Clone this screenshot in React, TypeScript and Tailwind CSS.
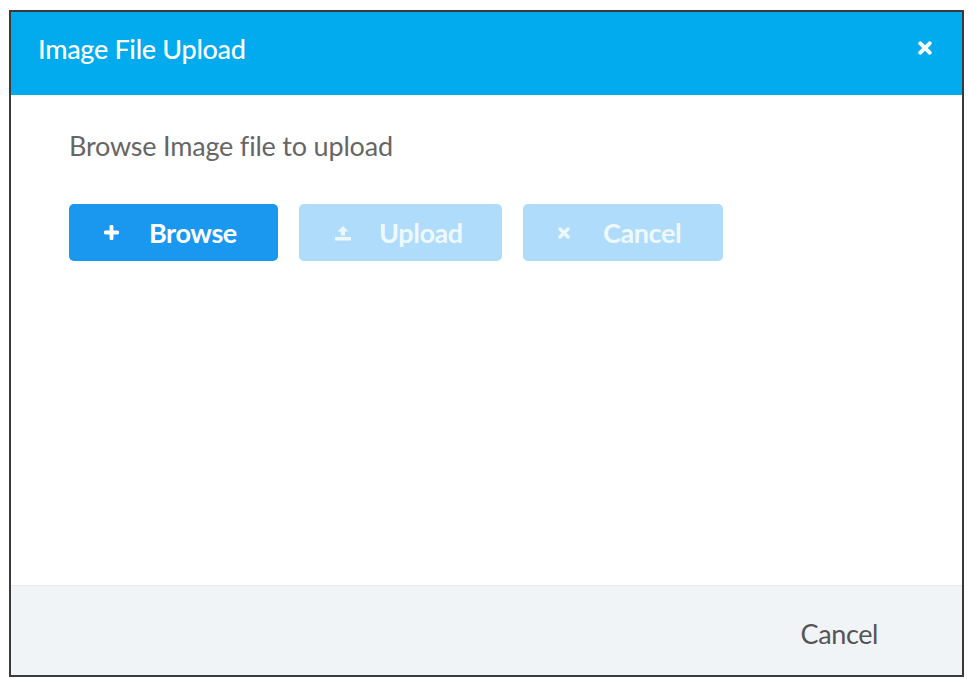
import React from "react";

const PlusIcon = () => (
  <svg width="15" height="15" viewBox="0 0 14 14" fill="none">
    <path d="M7 1.5v11M1.5 7h11" stroke="currentColor" strokeWidth="3.6" strokeLinecap="round" />
  </svg>
);

const UploadIcon = () => (
  <svg width="18" height="16" viewBox="0 0 18 16" fill="currentColor">
    <path d="M9 1l5.5 5.5H11v4H7v-4H3.5z" />
    <rect x="1" y="12" width="16" height="3.5" rx="0.6" />
  </svg>
);

const XIcon = ({ size = 12 }: { size?: number }) => (
  <svg width={size} height={size} viewBox="0 0 12 12" fill="none">
    <path d="M2 2l8 8M10 2l-8 8" stroke="currentColor" strokeWidth="3.4" strokeLinecap="round" />
  </svg>
);

interface BtnProps {
  icon: React.ReactNode;
  label: string;
  disabled?: boolean;
  className?: string;
}

const ActionButton: React.FC<BtnProps> = ({ icon, label, disabled, className = "" }) => (
  <button
    disabled={disabled}
    className={`flex items-center h-[57px] rounded-[5px] pl-[35px] font-bold text-[27px] leading-[32px] ${
      disabled ? "bg-[#aedcfa] text-[#eef8ff]" : "bg-[#1a97ef] text-white"
    } ${className}`}
  >
    <span className="w-[45px] flex items-center">{icon}</span>
    <span className="tracking-[-0.4px]">{label}</span>
  </button>
);

export default function App() {
  return (
    <div className="min-h-screen bg-white pt-[10px] pl-[9px] font-['Lato','Liberation_Sans',sans-serif]">
      <div className="w-[955px] h-[667px] border-2 border-[#3a3a3a] flex flex-col">
        {/* Title bar */}
        <div className="h-[83px] bg-[#02abee] flex items-center justify-between pl-[27px] pr-[30px]">
          <h1 className="text-white text-[27px] leading-[32px] font-medium tracking-[-0.3px] pb-[10px]">Image File Upload</h1>
          <span className="text-white pb-[12px]">
            <XIcon size={14} />
          </span>
        </div>

        {/* Body */}
        <div className="flex-1 bg-white px-[58px] pt-[35px]">
          <p className="text-[#666] text-[27px] leading-[32px] tracking-[-0.2px]">Browse Image file to upload</p>
          <div className="flex gap-[21px] mt-[42px]">
            <ActionButton icon={<PlusIcon />} label="Browse" className="w-[209px]" />
            <ActionButton icon={<UploadIcon />} label="Upload" disabled className="w-[203px]" />
            <ActionButton icon={<XIcon size={12} />} label="Cancel" disabled className="w-[200px]" />
          </div>
        </div>

        {/* Footer */}
        <div className="h-[90px] bg-[#f1f4f7] border-t border-[#e8ebee] flex items-center justify-end pr-[84px]">
          <button className="text-[#555] text-[27px] leading-[32px] tracking-[-0.4px] pt-[6px]">Cancel</button>
        </div>
      </div>
    </div>
  );
}
